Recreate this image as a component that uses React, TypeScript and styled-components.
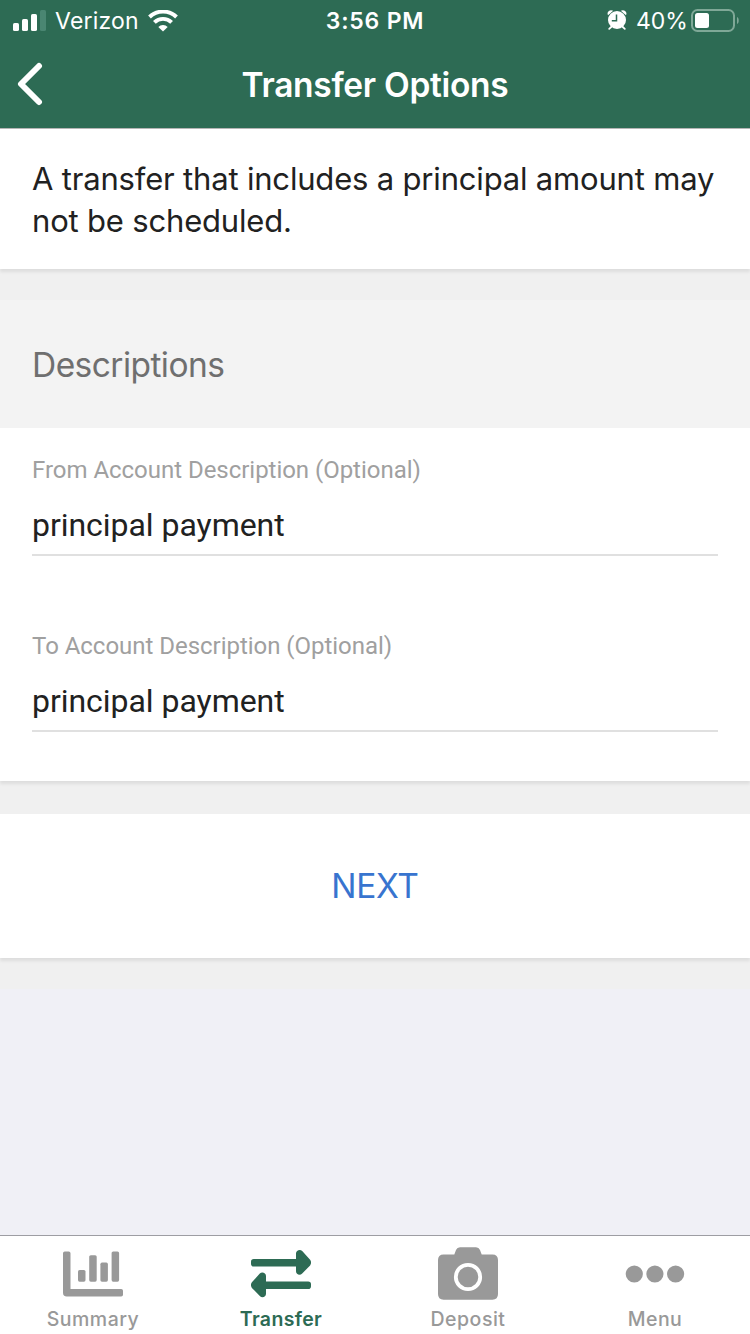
import React from 'react';
import styled, { createGlobalStyle } from 'styled-components';

const GREEN = '#2d6b54';
const GREY = '#999999';

const GlobalStyle = createGlobalStyle`
  *, *::before, *::after { box-sizing: border-box; }
  body { margin: 0; font-family: Inter, 'Liberation Sans', sans-serif; -webkit-font-smoothing: antialiased; }
`;

const Screen = styled.div`
  width: 750px;
  height: 1334px;
  display: flex;
  flex-direction: column;
  overflow: hidden;
  background: #f0f0f6;
`;

const Header = styled.header`
  height: 129px;
  flex: none;
  background: ${GREEN};
  border-bottom: 1px solid #b5b5b5;
  color: #fff;
`;

const StatusBar = styled.div`
  height: 40px;
  display: grid;
  grid-template-columns: 1fr auto 1fr;
  align-items: center;
  padding: 0 10px 0 13px;
`;

const StatusGroup = styled.div<{ $end?: boolean }>`
  display: flex;
  align-items: center;
  justify-content: ${(p) => (p.$end ? 'flex-end' : 'flex-start')};
  svg { display: block; flex: none; }
`;

const StatusText = styled.span<{ $spacing?: number }>`
  font-size: 23px;
  line-height: 40px;
  letter-spacing: ${(p) => p.$spacing ?? 0}px;
  white-space: nowrap;
  padding-top: 1px;
`;

const Clock = styled(StatusText)`
  font-weight: 600;
  margin-right: 3px;
`;

const Carrier = styled(StatusText)`
  width: 84px;
  margin: 0 9px 0 9px;
`;

const Percent = styled(StatusText)`
  width: 50px;
  margin: 0 5px 0 9px;
`;

const NavBar = styled.div`
  height: 88px;
  display: grid;
  grid-template-columns: 60px 1fr 60px;
  align-items: start;
`;

const BackButton = styled.button`
  height: 88px;
  padding: 0 0 0 16px;
  border: 0;
  background: none;
  display: flex;
  align-items: center;
`;

const Title = styled.h1`
  margin: 0;
  padding-top: 1px;
  text-align: center;
  font-size: 33.5px;
  font-weight: 600;
  letter-spacing: -0.3px;
  line-height: 88px;
  white-space: nowrap;
`;

const Content = styled.main`
  flex: 1;
  min-height: 0;
`;

const Card = styled.section<{ $height: number }>`
  position: relative;
  height: ${(p) => p.$height}px;
  background: #fff;
  box-shadow: 0 3px 3px rgba(0, 0, 0, 0.08);
`;

const Gap = styled.div<{ $height: number }>`
  height: ${(p) => p.$height}px;
  background: #f0f0f0;
`;

const Notice = styled.p`
  margin: 0;
  padding: 29px 32px 0;
  font-size: 31px;
  line-height: 42px;
  letter-spacing: -0.18px;
  color: #212121;
  white-space: nowrap;
`;

const SectionHeading = styled.h2`
  margin: 0;
  height: 128px;
  padding: 0 32px;
  background: #f3f3f3;
  color: #6f6f6f;
  font-size: 33.5px;
  font-weight: 400;
  letter-spacing: -0.55px;
  line-height: 130px;
`;

const Form = styled.div`
  padding: 24px 32px 0;
  display: flex;
  flex-direction: column;
  gap: 72px;
`;

const Field = styled.label`
  display: block;
  height: 104px;
  border-bottom: 2px solid #e0e0e0;
  font-family: Roboto, sans-serif;
`;

const FieldLabel = styled.span`
  display: block;
  font-size: 24px;
  line-height: 36px;
  letter-spacing: -0.03px;
  color: #a0a0a0;
`;

const FieldInput = styled.input`
  display: block;
  width: 100%;
  height: 48px;
  margin-top: 13px;
  padding: 0;
  border: 0;
  outline: 0;
  background: none;
  font: 400 32px/48px Roboto, sans-serif;
  letter-spacing: -0.04px;
  color: #212121;
`;

const NextButton = styled.button`
  display: block;
  width: 100%;
  height: 144px;
  padding: 0;
  border: 0;
  background: none;
  color: #3874cf;
  font: 400 33.5px/144px Inter, sans-serif;
  letter-spacing: -0.3px;
`;

const TabBar = styled.nav`
  height: 99px;
  flex: none;
  display: grid;
  grid-template-columns: 186px 190px 184px 190px;
  background: #fff;
  border-top: 1px solid #9d9da3;
`;

const Tab = styled.a<{ $active?: boolean }>`
  display: flex;
  flex-direction: column;
  align-items: center;
  color: ${(p) => (p.$active ? GREEN : GREY)};
  font-size: 19.5px;
  font-weight: ${(p) => (p.$active ? 600 : 500)};
  line-height: 24px;
  letter-spacing: ${(p) => (p.$active ? 0.35 : 0.5)}px;
  svg { display: block; margin: 9px 0 6px; }
`;

const SignalIcon = () => (
  <svg width="33" height="22" viewBox="0 0 33 22" fill="#fff">
    <rect x="0" y="13" width="6" height="8" rx="1.6" />
    <rect x="9" y="9" width="6" height="12" rx="1.6" />
    <rect x="18" y="4" width="6" height="17" rx="1.6" />
    <rect x="27" y="0" width="6" height="21" rx="1.6" fill="#4a8672" />
  </svg>
);

const WifiIcon = () => (
  <svg width="30" height="22" viewBox="0 0 30 22" fill="none" stroke="#fff" strokeWidth="3.9">
    <path d="M1.5 7A19.4 19.4 0 0 1 28.5 7" />
    <path d="M6.4 12.4A12.3 12.3 0 0 1 23.6 12.4" />
    <path d="M15 21.5L10.3 16.9A6.5 6.5 0 0 1 19.7 16.9Z" fill="#fff" stroke="none" />
  </svg>
);

const AlarmIcon = () => (
  <svg width="20" height="22" viewBox="0 0 20 22">
    <path d="M4.2 17L2.2 18.8M15.8 17L17.8 18.8" stroke="#fff" strokeWidth="1.8" strokeLinecap="round" />
    <path d="M1 5.3C-.8 2 3 -1 6.2 .8ZM19 5.3C20.8 2 17 -1 13.8 .8Z" fill="#fff" />
    <circle cx="10" cy="10" r="9" fill="#fff" />
    <path d="M9.5 4.5V10.7H4.8" fill="none" stroke={GREEN} strokeWidth="1.5" />
  </svg>
);

const BatteryIcon = () => (
  <svg width="49" height="24" viewBox="0 0 49 24">
    <rect x="1" y="1" width="42" height="21" rx="5.5" fill="none" stroke="#7fa897" strokeWidth="2" />
    <path d="M46 8c2.3.8 2.3 6.2 0 7z" fill="#7fa897" />
    <rect x="4" y="4" width="14" height="15" rx="2.5" fill="#fff" />
  </svg>
);

const BackIcon = () => (
  <svg width="28" height="44" viewBox="0 0 28 44" fill="none" stroke="#fff" strokeWidth="6" strokeLinecap="round">
    <path d="M23 4L5 22L23 40" strokeLinejoin="round" />
  </svg>
);

const SummaryIcon = () => (
  <svg width="60" height="56" viewBox="0 0 60 56" fill={GREY}>
    <path d="M1.8 6.5H5.7Q7.5 6.5 7.5 8.3V44H58.2Q60 44 60 45.8V49.7Q60 51.5 58.2 51.5H3.75Q0 51.5 0 47.7V8.3Q0 6.5 1.8 6.5Z" />
    <rect x="15" y="25" width="7.5" height="11.7" rx="1.6" />
    <rect x="26.2" y="10.2" width="7.5" height="26.5" rx="1.6" />
    <rect x="37.4" y="17.6" width="7.5" height="19.1" rx="1.6" />
    <rect x="48.6" y="6.5" width="7.5" height="30.2" rx="1.6" />
  </svg>
);

const TransferIcon = () => (
  <svg width="60" height="56" viewBox="0 0 60 56" fill={GREEN}>
    <path d="M2.8 14H45V8.5C45 5.3 49 4 51.2 6L59.1 14.7Q61 17.5 59.1 20.4L51.2 28.5C49 30.8 45 29.5 45 26.3V21.5H2.8Q0 21.5 0 18.7V16.8Q0 14 2.8 14Z" />
    <path d="M57.2 36.5H15V31C15 27.8 11 26.5 8.8 28.5L.9 37.2Q-1 40 .9 42.9L8.8 51C11 53.3 15 52 15 48.8V44H57.2Q60 44 60 41.2V39.3Q60 36.5 57.2 36.5Z" />
  </svg>
);

const CameraIcon = () => (
  <svg width="60" height="56" viewBox="0 0 60 56">
    <path d="M5.6 9.5H16.3L18 5Q19.1 2.2 22 2.2H38Q40.9 2.2 42 5L43.7 9.5H54.4Q60 9.5 60 15.1V49.1Q60 54.7 54.4 54.7H5.6Q0 54.7 0 49.1V15.1Q0 9.5 5.6 9.5Z" fill={GREY} />
    <circle cx="30" cy="32" r="12.2" fill="none" stroke="#fff" strokeWidth="3.8" />
  </svg>
);

const MenuIcon = () => (
  <svg width="60" height="56" viewBox="0 0 60 56" fill={GREY}>
    <circle cx="9.3" cy="29" r="8.6" />
    <circle cx="29.9" cy="29" r="8.6" />
    <circle cx="50.6" cy="29" r="8.6" />
  </svg>
);

export default function App() {
  return (
    <Screen>
      <GlobalStyle />
      <Header>
        <StatusBar>
          <StatusGroup>
            <SignalIcon />
            <Carrier $spacing={0.2}>Verizon</Carrier>
            <WifiIcon />
          </StatusGroup>
          <Clock $spacing={0.8}>3:56 PM</Clock>
          <StatusGroup $end>
            <AlarmIcon />
            <Percent>40%</Percent>
            <BatteryIcon />
          </StatusGroup>
        </StatusBar>
        <NavBar>
          <BackButton aria-label="Back"><BackIcon /></BackButton>
          <Title>Transfer Options</Title>
        </NavBar>
      </Header>
      <Content>
        <Card $height={140}>
          <Notice>
            A transfer that includes a principal amount may<br />not be scheduled.
          </Notice>
        </Card>
        <Gap $height={31} />
        <SectionHeading>Descriptions</SectionHeading>
        <Card $height={353}>
          <Form>
            <Field>
              <FieldLabel>From Account Description (Optional)</FieldLabel>
              <FieldInput defaultValue="principal payment" />
            </Field>
            <Field>
              <FieldLabel>To Account Description (Optional)</FieldLabel>
              <FieldInput defaultValue="principal payment" />
            </Field>
          </Form>
        </Card>
        <Gap $height={33} />
        <Card $height={144}>
          <NextButton>NEXT</NextButton>
        </Card>
        <Gap $height={31} />
      </Content>
      <TabBar>
        <Tab><SummaryIcon />Summary</Tab>
        <Tab $active><TransferIcon />Transfer</Tab>
        <Tab><CameraIcon />Deposit</Tab>
        <Tab><MenuIcon />Menu</Tab>
      </TabBar>
    </Screen>
  );
}
